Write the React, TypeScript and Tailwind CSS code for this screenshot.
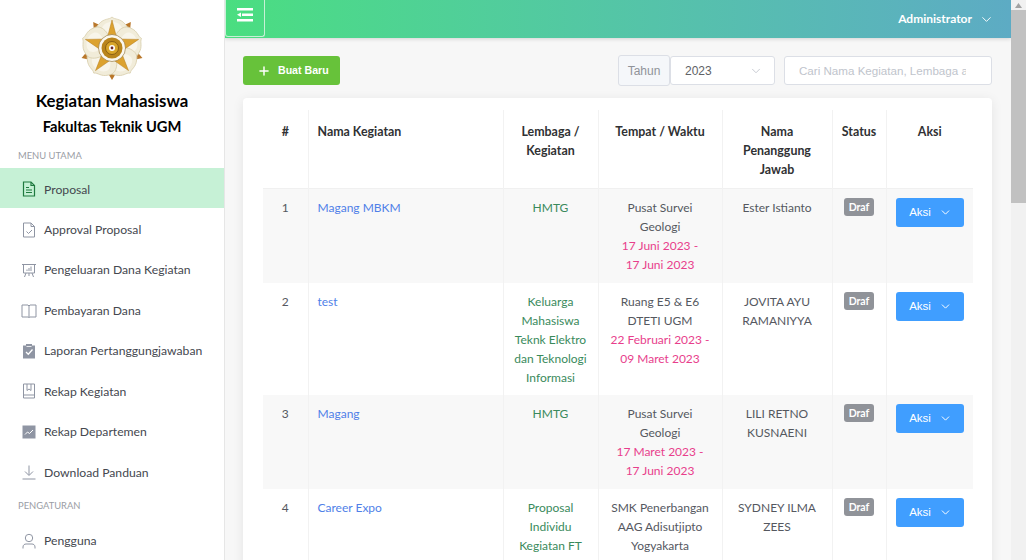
import { ChevronDown, Plus } from 'lucide-react';

const font = { fontFamily: 'Lato, "Noto Sans", sans-serif' };

function UgmLogo() {
  const angles = [0, 72, 144, 216, 288];
  return (
    <svg width="66" height="66" viewBox="-33 -33 66 66">
      {angles.map((a) => (
        <g key={a} transform={`rotate(${a + 36})`}>
          <path d="M0 -32 L3 -27 L0 -22 L-3 -27Z" fill="#b9772a" />
        </g>
      ))}
      {angles.map((a) => (
        <g key={a} transform={`rotate(${a})`}>
          <path d="M0 0 C-14 -6 -20 -18 -13 -24 C-8 -30 -3 -28 0 -31 C3 -28 8 -30 13 -24 C20 -18 14 -6 0 0Z" fill="#f1ecd9" stroke="#d9cfae" strokeWidth="0.8" />
          <path d="M0 -8 C-8 -11 -12 -18 -9 -22 C-6 -26 -3 -25 0 -27 C3 -25 6 -26 9 -22 C12 -18 8 -11 0 -8Z" fill="#f8f5ea" />
        </g>
      ))}
      <path
        d="M0 -28 L5 -9 L26.600 -8.600 L9 3.500 L16.500 22.600 L0 11 L-16.500 22.600 L-9 3.500 L-26.600 -8.600 L-5 -9Z"
        fill="#dca22f"
        stroke="#b47c1e"
        strokeWidth="0.5"
      />
      <circle r="13.500" fill="#fbf8ef" stroke="#8a6a2c" strokeWidth="0.6" />
      <circle r="10.500" fill="#b9851c" />
      <circle r="6.500" fill="#d9a62a" stroke="#8a5f14" strokeWidth="1" />
      <circle r="3" fill="#fff" />
      <circle r="1.400" fill="#6e2a2a" />
    </svg>
  );
}

const iconClass = 'h-[16px] w-[16px] shrink-0';

function IconProposal() {
  return (
    <svg className={iconClass} viewBox="0 0 16 16" fill="none" stroke="#1f7a3f" strokeWidth="1.2">
      <path d="M2.500 1H10l3.500 3.500V15h-11Z" />
      <path d="M10 1v3.500h3.500M5 6.500h3M5 9h6M5 11.500h6" />
    </svg>
  );
}
function IconApproval() {
  return (
    <svg className={iconClass} viewBox="0 0 16 16" fill="none" stroke="#8f95a3" strokeWidth="1">
      <path d="M2.500 1H10l3.500 3.500V15h-11Z" />
      <path d="M10 1v3.500h3.500M5.500 9.500l2 2 3.500-3.500" />
    </svg>
  );
}
function IconBoard() {
  return (
    <svg className={iconClass} viewBox="0 0 16 16" fill="none" stroke="#8f95a3" strokeWidth="1">
      <path d="M1 2.500h14M2.500 2.500V11h11V2.500M5 11l-1.500 4M11 11l1.500 4M8 11v3" />
      <path d="M6 9V7.500M8 9V6M10 9V4.500" />
    </svg>
  );
}
function IconBook() {
  return (
    <svg className={iconClass} viewBox="0 0 16 16" fill="none" stroke="#8f95a3" strokeWidth="1">
      <path d="M1 2h6l1 1 1-1h6V14H9l-1 .5L7 14H1ZM8 3v11" />
    </svg>
  );
}
function IconClipboard() {
  return (
    <svg className={iconClass} viewBox="0 0 16 16">
      <path d="M2 2.500h3V1h6v1.500h3V15.500H2Z" fill="#8f95a3" />
      <path d="M5 9l2.300 2.300L11.500 6.500" fill="none" stroke="#fff" strokeWidth="1.300" />
      <path d="M5.500 3.500h5" stroke="#fff" strokeWidth="0.800" />
    </svg>
  );
}
function IconRecord() {
  return (
    <svg className={iconClass} viewBox="0 0 16 16" fill="none" stroke="#8f95a3" strokeWidth="1">
      <path d="M2.500 1h11v14h-11ZM2.500 12h11M6 1v6.500l2-1.500 2 1.500V1" />
    </svg>
  );
}
function IconChart() {
  return (
    <svg className={iconClass} viewBox="0 0 16 16">
      <rect x="1.500" y="1.500" width="13" height="13" fill="#8f95a3" />
      <path d="M4 10.500l2.500-2.500 2 1.500 3.500-3.500" fill="none" stroke="#fff" strokeWidth="1" />
    </svg>
  );
}
function IconDownload() {
  return (
    <svg className={iconClass} viewBox="0 0 16 16" fill="none" stroke="#8f95a3" strokeWidth="1">
      <path d="M8 1.500v9.500M4 7.500l4 4 4-4M1.500 15h13" />
    </svg>
  );
}
function IconUser() {
  return (
    <svg className={iconClass} viewBox="0 0 16 16" fill="none" stroke="#8f95a3" strokeWidth="1">
      <circle cx="8" cy="5" r="3.700" />
      <path d="M2 15.500v-1.500c0-2 1.500-3 3-3h6c1.500 0 3 1 3 3v1.500" />
    </svg>
  );
}

const menu = [
  { label: 'Proposal', icon: <IconProposal />, active: true },
  { label: 'Approval Proposal', icon: <IconApproval /> },
  { label: 'Pengeluaran Dana Kegiatan', icon: <IconBoard /> },
  { label: 'Pembayaran Dana', icon: <IconBook /> },
  { label: 'Laporan Pertanggungjawaban', icon: <IconClipboard /> },
  { label: 'Rekap Kegiatan', icon: <IconRecord /> },
  { label: 'Rekap Departemen', icon: <IconChart /> },
  { label: 'Download Panduan', icon: <IconDownload /> },
];

function MenuItem({ label, icon, active }: { label: string; icon: React.ReactNode; active?: boolean }) {
  return (
    <div className={`flex h-[40.500px] items-center gap-[7px] pt-[2px] pl-[21px] text-[12.200px] text-[#45484f] ${active ? 'bg-[#c6f1d6] text-[#2c6b45]' : ''}`}>
      {icon}
      <span className="pt-[1px]">{label}</span>
    </div>
  );
}

function Sidebar() {
  return (
    <aside className="flex h-full w-[225px] shrink-0 flex-col overflow-hidden border-r border-[#e6e6e6] bg-white">
      <div className="flex justify-center pt-[15px]">
        <UgmLogo />
      </div>
      <h1 className="mt-[8px] text-center text-[16.800px] leading-[24px] font-bold text-black">Kegiatan Mahasiswa</h1>
      <h2 className="mt-[1px] text-center text-[14.700px] leading-[24px] font-bold text-black">Fakultas Teknik UGM</h2>
      <div className="mt-[11px] mb-[5px] pl-[18px] text-[9.400px] leading-[14px] text-[#9a9da5]">MENU UTAMA</div>
      {menu.map((m) => (
        <MenuItem key={m.label} {...m} />
      ))}
      <div className="mt-[7px] mb-[7px] pl-[18px] text-[9.400px] leading-[14px] text-[#9a9da5]">PENGATURAN</div>
      <MenuItem label="Pengguna" icon={<IconUser />} />
    </aside>
  );
}

function Topbar() {
  return (
    <header className="flex h-[38px] shrink-0 items-center justify-between bg-gradient-to-r from-[#4ade80] to-[#5dabc4] pr-[17px] shadow-[0_1px_4px_rgba(0,0,0,0.15)]">
      <button className="flex h-[37px] w-[40px] items-start justify-center self-start rounded-b-[3px] border-x border-b border-[#c7f0d6] pt-[8px]">
        <svg width="16" height="14" viewBox="0 0 16 14" fill="#fff">
          <rect y="0" width="16" height="2.500" />
          <rect x="5" y="5.500" width="11" height="2.500" />
          <path d="M0 6.750 L4 4.500 V9Z" />
          <rect y="11" width="16" height="2.500" />
        </svg>
      </button>
      <div className="flex items-center gap-[7px] text-[12px] font-bold text-white">
        <span>Administrator</span>
        <ChevronDown className="h-[15px] w-[15px]" strokeWidth={1.500} />
      </div>
    </header>
  );
}

function Toolbar() {
  return (
    <div className="flex h-[29px] items-center justify-between" style={{ fontFamily: '"Liberation Sans", sans-serif' }}>
      <button className="flex h-[29px] w-[97px] items-center gap-[7px] rounded-[3px] bg-[#67c23a] pl-[14px] text-[10.600px] font-bold text-white">
        <Plus className="h-[14px] w-[14px]" strokeWidth={2.500} />
        <span>Buat Baru</span>
      </button>
      <div className="flex items-center">
        <div className="flex h-[31px] w-[52px] items-center justify-center rounded-[3px] border border-[#dcdfe6] bg-[#f5f7fa] text-[12px] text-[#909399]">Tahun</div>
        <div className="flex h-[29px] w-[105px] items-center justify-between rounded-[3px] border border-[#dcdfe6] bg-white pr-[11px] pl-[14px] text-[12px] text-[#606266]">
          <span>2023</span>
          <ChevronDown className="h-[14px] w-[14px] text-[#c0c4cc]" strokeWidth={1.500} />
        </div>
        <input
          className="ml-[9px] h-[29px] w-[208px] rounded-[3px] border border-[#dcdfe6] bg-white pr-[25px] pl-[14px] text-[11.600px] outline-none placeholder:text-[#c0c4cc]"
          placeholder="Cari Nama Kegiatan, Lembaga atau Penanggung Jawab"
        />
      </div>
    </div>
  );
}

const rows = [
  { no: 1, name: 'Magang MBKM', org: ['HMTG'], place: ['Pusat Survei', 'Geologi'], date: ['17 Juni 2023 -', '17 Juni 2023'], pic: ['Ester Istianto'] },
  { no: 2, name: 'test', org: ['Keluarga', 'Mahasiswa', 'Teknk Elektro', 'dan Teknologi', 'Informasi'], place: ['Ruang E5 & E6', 'DTETI UGM'], date: ['22 Februari 2023 -', '09 Maret 2023'], pic: ['JOVITA AYU', 'RAMANIYYA'] },
  { no: 3, name: 'Magang', org: ['HMTG'], place: ['Pusat Survei', 'Geologi'], date: ['17 Maret 2023 -', '17 Juni 2023'], pic: ['LILI RETNO', 'KUSNAENI'] },
  { no: 4, name: 'Career Expo', org: ['Proposal', 'Individu', 'Kegiatan FT', 'UGM'], place: ['SMK Penerbangan', 'AAG Adisutjipto', 'Yogyakarta'], date: ['1 Juni 2023 -', '1 Juni 2023'], pic: ['SYDNEY ILMA', 'ZEES'] },
];

function Lines({ items }: { items: string[] }) {
  return (
    <>
      {items.map((t) => (
        <div key={t} className="whitespace-nowrap">{t}</div>
      ))}
    </>
  );
}

const thClass = 'border-r border-[#f2f2f2] px-[8px] pt-[12px] pb-[9px] align-top text-[12.400px] leading-[19px] font-bold text-[#303133] last:border-r-0';
const tdClass = 'border-r border-[#f2f2f2] px-[8px] pt-[9px] pb-[9px] text-center align-top leading-[19px] last:border-r-0';

function ProposalTable() {
  return (
    <table className="w-[710px] table-fixed border-collapse text-[12px] text-[#55585f]">
      <colgroup>
        <col className="w-[45px]" />
        <col className="w-[195px]" />
        <col className="w-[95px]" />
        <col className="w-[124px]" />
        <col className="w-[110px]" />
        <col className="w-[54px]" />
        <col className="w-[87px]" />
      </colgroup>
      <thead>
        <tr className="border-b border-[#f0f0f0]">
          <th className={thClass}>#</th>
          <th className={`${thClass} pl-[9px] text-left`}>Nama Kegiatan</th>
          <th className={thClass}>Lembaga / Kegiatan</th>
          <th className={thClass}>Tempat / Waktu</th>
          <th className={thClass}>Nama Penanggung Jawab</th>
          <th className={`${thClass} px-0`}>Status</th>
          <th className={thClass}>Aksi</th>
        </tr>
      </thead>
      <tbody>
        {rows.map((r) => (
          <tr key={r.no} className="odd:bg-[#f8f8f8]">
            <td className={tdClass}>{r.no}</td>
            <td className={`${tdClass} pl-[9px] text-left text-[#4f7fe8]`}>{r.name}</td>
            <td className={`${tdClass} px-[4px] text-[#3a8a5c]`}>
              <div className={r.org.length > 4 ? '-mb-[1px]' : ''}>
                <Lines items={r.org} />
              </div>
            </td>
            <td className={`${tdClass} px-[4px]`}>
              <Lines items={r.place} />
              <div className="text-[#e83e8c]">
                <Lines items={r.date} />
              </div>
            </td>
            <td className={`${tdClass} px-[4px]`}>
              <Lines items={r.pic} />
            </td>
            <td className={`${tdClass} px-0 pt-[9.600px]`}>
              <span className="inline-flex h-[18px] w-[30px] items-center justify-center rounded-[3px] bg-[#909399] align-top text-[10.500px] leading-none font-bold text-white">Draf</span>
            </td>
            <td className={`${tdClass} px-[9px] pt-[9.600px]`}>
              <button className="flex h-[29px] w-[68px] items-center justify-center gap-[8px] rounded-[3px] bg-[#409eff] pl-[2px] text-[11.500px] font-medium text-white" style={{ fontFamily: '"Liberation Sans", sans-serif' }}>
                <span>Aksi</span>
                <ChevronDown className="h-[13px] w-[13px]" strokeWidth={1.800} />
              </button>
            </td>
          </tr>
        ))}
      </tbody>
    </table>
  );
}

function Scrollbar() {
  return (
    <div className="flex h-full w-[15px] shrink-0 flex-col items-center bg-[#f1f1f1]">
      <svg className="mt-[1px] h-[9px] w-[9px]" viewBox="0 0 9 9" fill="#a3a3a3">
        <path d="M4.500 2 L8 7 H1Z" />
      </svg>
      <div className="h-[193px] w-[15px] bg-[#c1c1c1]" />
    </div>
  );
}

export default function App() {
  return (
    <div className="flex h-[560px] w-[1026px] overflow-hidden bg-[#f7f7f7]" style={font}>
      <Sidebar />
      <main className="flex h-full min-w-0 flex-1 flex-col overflow-hidden">
        <Topbar />
        <div className="pt-[18px] pr-[19px] pl-[18px]">
          <Toolbar />
          <section className="mt-[13px] rounded-[4px] bg-white pt-[12px] pr-[19px] pb-[20px] pl-[20px] shadow-[0_2px_12px_rgba(0,0,0,0.08)]">
            <ProposalTable />
          </section>
        </div>
      </main>
      <Scrollbar />
    </div>
  );
}
